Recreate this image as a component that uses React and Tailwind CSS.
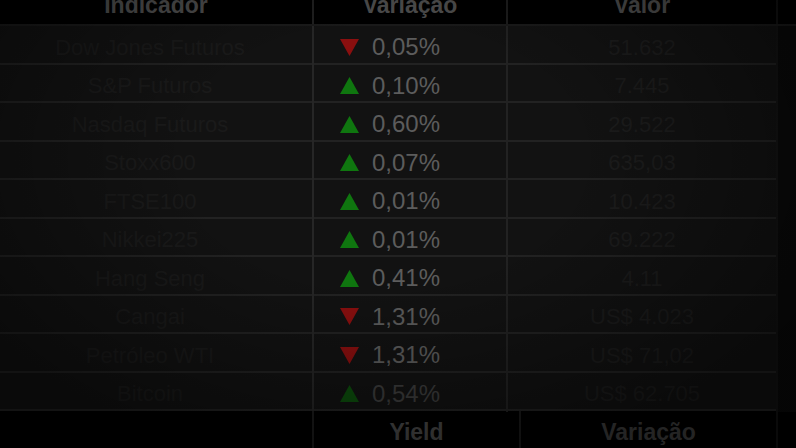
import React from 'react';

const rows = [
  { name: 'Dow Jones Futuros', up: false, pct: '0,05%', value: '51.632' },
  { name: 'S&P Futuros', up: true, pct: '0,10%', value: '7.445' },
  { name: 'Nasdaq Futuros', up: true, pct: '0,60%', value: '29.522' },
  { name: 'Stoxx600', up: true, pct: '0,07%', value: '635,03' },
  { name: 'FTSE100', up: true, pct: '0,01%', value: '10.423' },
  { name: 'Nikkei225', up: true, pct: '0,01%', value: '69.222' },
  { name: 'Hang Seng', up: true, pct: '0,41%', value: '4.11' },
  { name: 'Cangai', up: false, pct: '1,31%', value: 'US$ 4.023' },
  { name: 'Petróleo WTI', up: false, pct: '1,31%', value: 'US$ 71,02' },
  { name: 'Bitcoin', up: true, pct: '0,54%', value: 'US$ 62.705', dim: true },
];

const Arrow = ({ up, dim }) => (
  <svg width="19" height="17" viewBox="0 0 19 17" className="shrink-0">
    {up ? (
      <polygon points="9.5,0 19,17 0,17" fill={dim ? '#0c4f0c' : '#0f760f'} />
    ) : (
      <polygon points="0,0 19,0 9.5,17" fill="#8a0f0f" />
    )}
  </svg>
);

const App = () => {
  return (
    <div className="relative w-[796px] h-[448px] overflow-hidden bg-black font-['Liberation_Sans',Arial,sans-serif]">
      <div className="-mt-[13px]">
        <div className="grid grid-cols-[314px_194px_270px_1fr] h-[39px] bg-black border-b-2 border-[#1a1a1a] text-[23px] font-bold text-[#4c4c4c]">
          <div className="flex items-center justify-center border-r-2 border-[#1f1f1f]">Indicador</div>
          <div className="flex items-center justify-center border-r-2 border-[#1c1c1c]">Variação</div>
          <div className="flex items-center justify-center border-r-2 border-[#121212]">Valor</div>
          <div />
        </div>

        {rows.map((r) => (
          <div
            key={r.name}
            className="grid grid-cols-[314px_194px_270px_1fr] h-[38.5px] bg-[#121212] border-b-2 border-[#222222]"
          >
            <div className="flex items-center justify-center pt-[3px] pr-[12px] border-r-2 border-[#262626] text-[22px] text-[#1a1a1a]">
              {r.name}
            </div>
            <div className="flex items-center gap-[13px] pt-[3px] pl-[26px] border-r-2 border-[#222222]">
              <Arrow up={r.up} dim={r.dim} />
              <span className={`text-[24px] ${r.dim ? 'text-[#3d3d3d]' : 'text-[#5c5c5c]'}`}>{r.pct}</span>
            </div>
            <div className="flex items-center justify-center pt-[3px] border-r-2 border-[#141414] text-[22px] text-[#1c1c1c]">
              {r.value}
            </div>
            <div className="bg-[#0a0a0a]" />
          </div>
        ))}

        <div className="grid grid-cols-[314px_207px_257px_1fr] h-[40px] bg-black text-[23px] font-bold text-[#4a4a4a]">
          <div className="border-r-2 border-[#1c1c1c]" />
          <div className="flex items-center justify-center pt-[2px] border-r-2 border-[#1a1a1a]">Yield</div>
          <div className="flex items-center justify-center pt-[2px] border-r-2 border-[#121212] text-[#424242]">Variação</div>
          <div />
        </div>
      </div>

      <div className="pointer-events-none absolute inset-0 bg-[radial-gradient(ellipse_60%_70%_at_48%_35%,transparent_40%,rgba(0,0,0,0.45)_100%)]" />
    </div>
  );
};

export default App;
